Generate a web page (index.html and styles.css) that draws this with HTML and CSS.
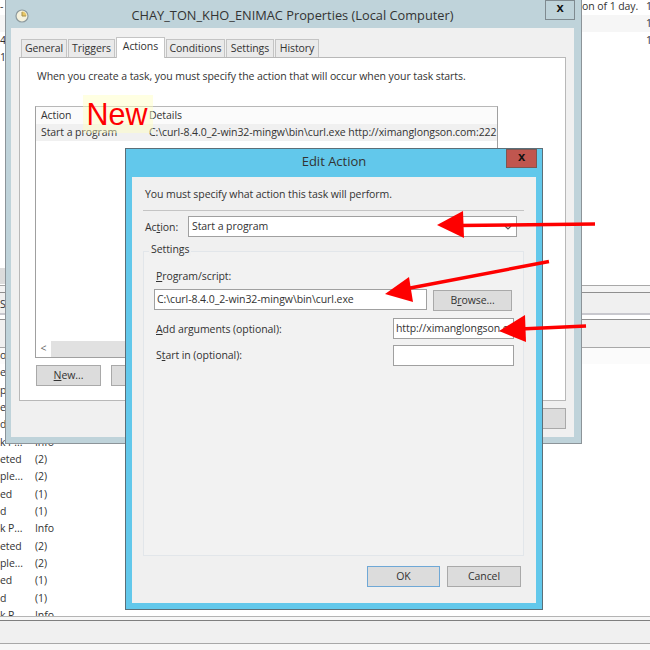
FILE: index.html
```html
<!DOCTYPE html>
<html lang="en">
<head>
    <meta charset="UTF-8">
    <title>Edit Action</title>
    <link rel="stylesheet" href="styles.css">
</head>
<body>
    <div class="desk">
        <!-- event list behind the windows -->
        <div class="bg-top">
            <div class="bg-row"><span class="bg-left">-</span><span class="bg-msg">on of 1 day.</span><span class="bg-num">1</span></div>
            <div class="bg-row shaded"><span class="bg-left"></span><span class="bg-msg"></span><span class="bg-num">1</span></div>
            <div class="bg-row"><span class="bg-left">4</span><span class="bg-msg"></span><span class="bg-num">1</span></div>
            <div class="bg-row"><span class="bg-left">1</span></div>
        </div>
        <div class="bg-stub"></div>
        <div class="bg-bands">
            <div class="band-a"></div>
            <div class="band-b"><span class="band-text">S</span></div>
            <div class="band-c"></div>
            <div class="band-d"></div>
        </div>
        <div class="bg-list">
            <div class="ev"><span class="ev-a">o</span></div>
            <div class="ev"><span class="ev-a">e</span></div>
            <div class="ev"><span class="ev-a">p</span></div>
            <div class="ev"><span class="ev-a">e</span></div>
            <div class="ev"><span class="ev-a">d</span></div>
            <div class="ev"><span class="ev-a">k P...</span><span>Info</span></div>
            <div class="ev"><span class="ev-a">eted</span><span>(2)</span></div>
            <div class="ev"><span class="ev-a">ple...</span><span>(2)</span></div>
            <div class="ev"><span class="ev-a">ed</span><span>(1)</span></div>
            <div class="ev"><span class="ev-a">d</span><span>(1)</span></div>
            <div class="ev"><span class="ev-a">k P...</span><span>Info</span></div>
            <div class="ev"><span class="ev-a">eted</span><span>(2)</span></div>
            <div class="ev"><span class="ev-a">ple...</span><span>(2)</span></div>
            <div class="ev"><span class="ev-a">ed</span><span>(1)</span></div>
            <div class="ev"><span class="ev-a">d</span><span>(1)</span></div>
            <div class="ev"><span class="ev-a">k P...</span><span>Info</span></div>
        </div>
        <div class="bg-status">
            <div class="status-bar"></div>
        </div>

        <!-- properties window -->
        <div class="win props">
            <div class="props-title">
                <svg class="clock" width="14" height="14" viewBox="0 0 14 14">
                    <circle cx="7" cy="7" r="6" fill="#f5f1dc" stroke="#8d9a9e" stroke-width="1.2"/>
                    <path d="M7 7V2.5A4.5 4.5 0 0 1 11.5 7Z" fill="#e8c766"/>
                    <path d="M7 3V7H11" fill="none" stroke="#a58f4c" stroke-width="1"/>
                </svg>
                <span class="props-name">CHAY_TON_KHO_ENIMAC Properties (Local Computer)</span>
                <span class="props-close">x</span>
            </div>
            <div class="props-body">
                <div class="tabs">
                    <span class="tab tab-general">General</span>
                    <span class="tab tab-triggers">Triggers</span>
                    <span class="tab tab-actions">Actions</span>
                    <span class="tab tab-conditions">Conditions</span>
                    <span class="tab tab-settings">Settings</span>
                    <span class="tab tab-history">History</span>
                </div>
                <div class="tab-pane">
                    <p class="pane-note">When you create a task, you must specify the action that will occur when your task starts.</p>
                    <div class="action-list">
                        <div class="list-head"><span class="col-action">Action</span><span>Details</span></div>
                        <div class="list-row"><span class="col-action">Start a program</span><span>C:\curl-8.4.0_2-win32-mingw\bin\curl.exe http://ximanglongson.com:222</span></div>
                        <div class="list-fill"></div>
                        <div class="hscroll"><span class="scroll-left">&lt;</span></div>
                    </div>
                    <div class="list-buttons">
                        <span class="btn btn-new"><u>N</u>ew...</span>
                        <span class="btn btn-edit"></span>
                    </div>
                </div>
                <div class="props-foot"><span class="btn btn-foot"></span></div>
            </div>
        </div>

        <!-- edit action dialog -->
        <div class="win dialog">
            <div class="dialog-title">
                <span class="dialog-name">Edit Action</span>
                <span class="dialog-close">x</span>
            </div>
            <div class="dialog-body">
                <p class="dialog-note">You must specify what action this task will perform.</p>
                <div class="rule"></div>
                <div class="action-line">
                    <span class="action-label">Ac<u>t</u>ion:</span>
                    <div class="combo">
                        <span>Start a program</span>
                        <svg class="combo-arrow" width="8" height="5" viewBox="0 0 8 5"><path d="M1 1L4 4L7 1" fill="none" stroke="#555" stroke-width="1.2"/></svg>
                    </div>
                </div>
                <div class="settings">
                    <span class="settings-title">Settings</span>
                    <div class="field-label"><u>P</u>rogram/script:</div>
                    <div class="program-line">
                        <div class="input input-program">C:\curl-8.4.0_2-win32-mingw\bin\curl.exe</div>
                        <span class="btn btn-browse">B<u>r</u>owse...</span>
                    </div>
                    <div class="arg-line">
                        <span class="arg-label"><u>A</u>dd arguments (optional):</span>
                        <div class="input input-arg">http://ximanglongson.com:222</div>
                    </div>
                    <div class="arg-line">
                        <span class="arg-label">S<u>t</u>art in (optional):</span>
                        <div class="input input-arg"></div>
                    </div>
                </div>
                <div class="dialog-buttons">
                    <span class="btn btn-ok">OK</span>
                    <span class="btn btn-cancel">Cancel</span>
                </div>
            </div>
        </div>

        <!-- annotations drawn on top of the screenshot -->
        <div class="new-note">New</div>
        <svg class="arrows" width="650" height="650" viewBox="0 0 650 650">
            <path d="M595 224L458 225.5" stroke="#fe0000" stroke-width="3.5" fill="none"/>
            <path d="M437 225L463 211L464 238Z" fill="#fe0000"/>
            <path d="M549 261.5L405 289" stroke="#fe0000" stroke-width="3.5" fill="none"/>
            <path d="M385 294L409 277L413 302Z" fill="#fe0000"/>
            <path d="M586 326L520 329" stroke="#fe0000" stroke-width="3.5" fill="none"/>
            <path d="M499 331L525 315L526 342Z" fill="#fe0000"/>
        </svg>
    </div>
</body>
</html>
```

FILE: styles.css
```css
html, body { margin: 0; padding: 0; background: #fff; }
.desk {
    position: relative;
    width: 650px;
    height: 650px;
    overflow: hidden;
    font-family: "Open Sans", "Liberation Sans", sans-serif;
    font-size: 10.5px;
    letter-spacing: -0.07px;
    color: #333;
}
u { text-underline-offset: 1px; }
p { margin: 0; }

/* background */
.bg-top { position: absolute; left: 0; top: -2px; width: 650px; }
.bg-row { display: flex; height: 17px; line-height: 16px; }
.bg-row.shaded { background: #f6f6f6; }
.bg-left { width: 581px; flex: none; }
.bg-msg { width: 64px; padding-left: 1px; flex: none; }
.bg-num { flex: none; }
.bg-stub { position: absolute; left: 0; top: 268px; width: 5px; height: 16px; background: #dcdcdc; }
.bg-bands { position: absolute; left: 0; top: 285px; width: 650px; }
.band-a { height: 6px; background: #f4f4f4; border-top: 1px solid #a8a8a8; }
.band-b { height: 20px; background: #f0f0f0; border-top: 1px solid #8f8f8f; line-height: 23px; }
.band-text { display: block; width: 5px; overflow: hidden; }
.band-c { height: 4px; background: #fff; border-top: 2px solid #c8c8ce; }
.band-d { height: 27px; background: #f0f0f0; border-top: 1px solid #8f8f8f; border-bottom: 1px solid #a8a8a8; }
.bg-bands::after { content: ""; display: block; height: 16px; background: #fbfbfb; }
.bg-list { position: absolute; left: 0; top: 347px; }
.ev { display: flex; height: 17.35px; line-height: 17px; white-space: nowrap; }
.ev-a { width: 35px; flex: none; overflow: hidden; }
.bg-status {
    position: absolute;
    left: 0;
    top: 616px;
    width: 650px;
    height: 34px;
    background: #f7f7f7;
    border-top: 1px solid #b4b4b4;
    box-sizing: border-box;
}
.status-bar { margin-top: 3px; height: 22px; background: #f0f0f0; border-top: 1px solid #7f7f7f; border-bottom: 1px solid #a8a8a8; }

/* windows */
.win { position: absolute; box-sizing: border-box; }
.props {
    left: 5px;
    top: -1px;
    width: 577px;
    height: 445px;
    background: #bfd3da;
    border: 1px solid #8c9499;
    padding: 0 7px 6px 5px;
    display: flex;
    flex-direction: column;
}
.props-title { height: 28px; flex: none; position: relative; display: flex; justify-content: center; align-items: center; }
.clock { position: absolute; left: 4px; top: 9px; }
.props-name { font-size: 12.8px; letter-spacing: 0; color: #333; margin-top: 1px; }
.props-close {
    position: absolute;
    right: -1px;
    top: 0;
    width: 30px;
    height: 20px;
    box-sizing: border-box;
    border: 1px solid #7f8a90;
    text-align: center;
    font: bold 13px/14px "Liberation Sans", sans-serif;
    color: #111;
}
.props-body {
    flex: 1;
    background: #f0f0f0;
    padding: 10px 8px 0;
    display: flex;
    flex-direction: column;
}
.tabs { display: flex; height: 19px; align-items: flex-end; padding-left: 2px; }
.tab {
    box-sizing: border-box;
    height: 18px;
    margin-right: 1px;
    background: #eaeaea;
    border: 1px solid #c4c4c4;
    border-bottom: none;
    text-align: center;
    line-height: 16px;
}
.tab-general { width: 46px; }
.tab-triggers { width: 47px; }
.tab-actions { width: 49px; height: 21px; background: #fff; position: relative; top: 1px; line-height: 17px; }
.tab-conditions { width: 59px; }
.tab-settings { width: 48px; }
.tab-history { width: 44px; }
.tab-pane {
    box-sizing: border-box;
    height: 344px;
    background: #fff;
    border: 1px solid #b8b8b8;
    padding: 10px 15px 0;
}
.pane-note { line-height: 16px; padding-left: 2px; }
.action-list {
    box-sizing: border-box;
    margin-top: 22px;
    width: 463px;
    height: 252px;
    border: 1px solid #a0a0a0;
    border-top-color: #b8b8b8;
    display: flex;
    flex-direction: column;
    overflow: hidden;
    white-space: nowrap;
}
.list-head { display: flex; height: 17px; line-height: 16px; padding-left: 5px; background: #fbfbfb; flex: none; }
.list-row { display: flex; height: 17px; line-height: 16px; padding-left: 5px; background: #f0f0f0; flex: none; }
.col-action { width: 108px; flex: none; }
.list-fill { flex: 1; }
.hscroll { height: 16px; background: #e1e1e1; flex: none; }
.scroll-left { display: block; width: 15px; height: 16px; background: #fff; text-align: center; line-height: 15px; color: #666; }
.list-buttons { display: flex; gap: 10px; margin-top: 7px; }
.btn {
    box-sizing: border-box;
    display: block;
    height: 21px;
    background: #dcdcdc;
    border: 1px solid #a9a9a9;
    text-align: center;
    line-height: 18px;
}
.btn-new { width: 65px; margin-left: 1px; }
.btn-edit { width: 65px; }
.props-foot { display: flex; justify-content: flex-end; padding-top: 7px; }
.btn-foot { width: 72px; }

/* dialog */
.dialog {
    left: 125px;
    top: 148px;
    width: 418px;
    height: 462px;
    background: #62c8eb;
    border: 1px solid #5c6f78;
    padding: 0 6px 6px;
    display: flex;
    flex-direction: column;
}
.dialog-title { height: 28px; flex: none; position: relative; text-align: center; }
.dialog-name { font-size: 13px; letter-spacing: 0; line-height: 25px; color: #333; }
.dialog-close {
    position: absolute;
    right: -1px;
    top: 0;
    width: 31px;
    height: 19px;
    box-sizing: border-box;
    background: #c0564f;
    border: 1px solid #7d5753;
    font: bold 13px/14px "Liberation Sans", sans-serif;
    color: #111;
}
.dialog-body {
    flex: 1;
    background: #f0f0f0;
    padding: 0 12px 0 11px;
    display: flex;
    flex-direction: column;
}
.dialog-note { margin: 9px 0 0 2px; line-height: 16px; }
.rule { height: 0; margin-top: 8px; border-top: 1px solid #c4c4c4; }
.action-line { display: flex; align-items: center; margin-top: 5px; padding-left: 2px; }
.action-label { width: 43px; flex: none; }
.combo {
    box-sizing: border-box;
    width: 329px;
    height: 21px;
    background: #fff;
    border: 1px solid #a0a0a0;
    padding: 0 4px 2px 3px;
    display: flex;
    align-items: center;
    justify-content: space-between;
}
.combo-arrow { margin: 3px 0 0; }
.settings {
    box-sizing: border-box;
    position: relative;
    margin-top: 14px;
    height: 305px;
    background: #f2f2f2;
    border: 1px solid #e2e6ea;
    padding: 16px 11px 0 10px;
}
.settings-title { position: absolute; left: 5px; top: -10px; padding: 0 2px; background: #f0f0f0; line-height: 14px; }
.field-label { line-height: 16px; padding-left: 2px; }
.program-line { display: flex; gap: 6px; margin-top: 5px; }
.input {
    box-sizing: border-box;
    height: 21px;
    background: #fff;
    border: 1px solid #a0a0a0;
    padding: 0 2px;
    line-height: 18px;
    overflow: hidden;
    white-space: nowrap;
}
.input-program { width: 274px; }
.btn-browse { width: 79px; margin-top: 1px; }
.arg-line { display: flex; align-items: center; justify-content: space-between; margin-top: 6px; padding-left: 2px; width: 360px; box-sizing: border-box; }
.program-line + .arg-line { margin-top: 7px; }
.arg-line:last-child .arg-label { padding-bottom: 1px; }
.input-arg { width: 121px; }
.dialog-buttons { display: flex; justify-content: flex-end; gap: 7px; margin-top: 10px; padding-right: 3px; }
.btn-ok { width: 73px; border-color: #6fa8d6; }
.btn-cancel { width: 74px; }

/* annotations */
.new-note {
    box-sizing: border-box;
    position: absolute;
    left: 83px;
    top: 95px;
    width: 70px;
    height: 38px;
    padding-right: 2px;
    background: rgba(255, 255, 190, 0.45);
    color: #fe0000;
    font-family: "Liberation Sans", sans-serif;
    font-size: 30.5px;
    letter-spacing: 0;
    line-height: 38px;
    text-align: center;
}
.arrows { position: absolute; left: 0; top: 0; }
```
